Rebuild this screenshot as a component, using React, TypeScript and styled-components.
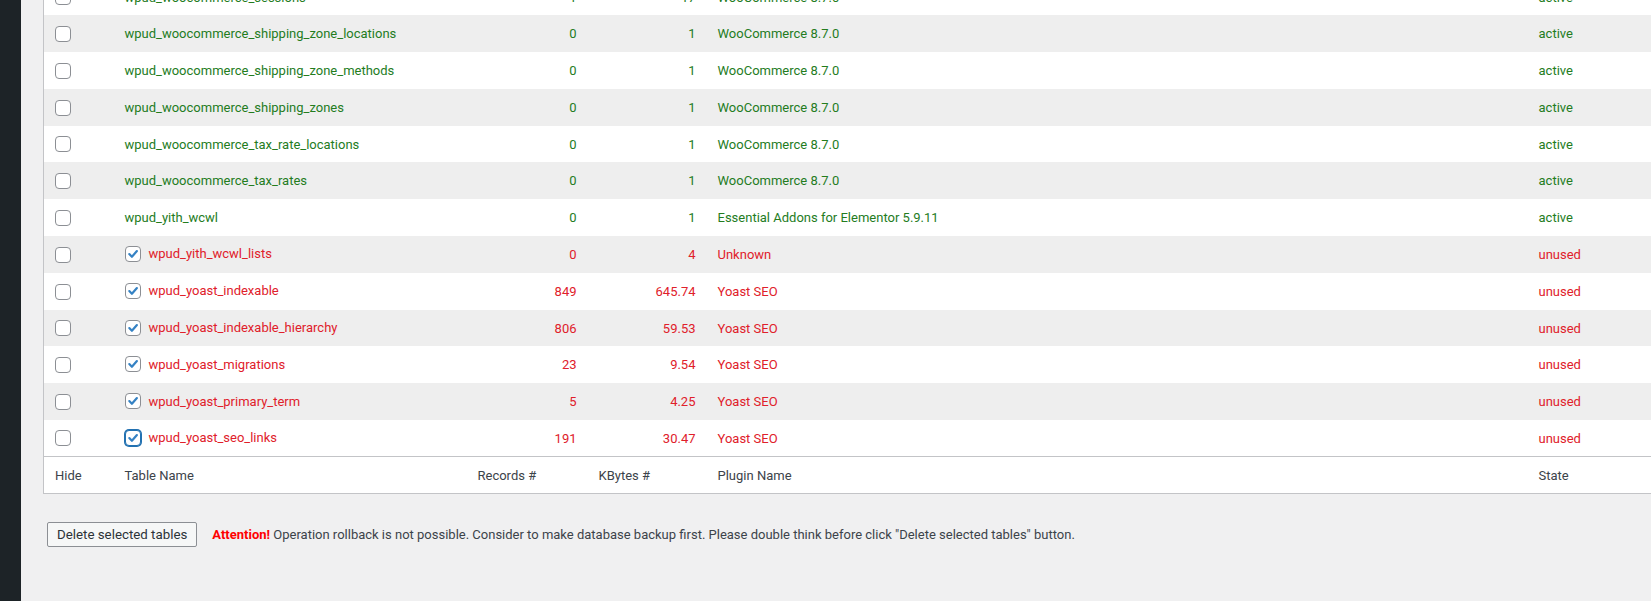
import React from "react";
import styled, { createGlobalStyle, css } from "styled-components";

const GlobalStyle = createGlobalStyle`
  html, body { margin: 0; padding: 0; }
  body {
    background: #f0f0f1;
    font-family: Roboto, "Open Sans", "Liberation Sans", sans-serif;
    font-size: 13px;
    color: #2c3338;
    overflow: hidden;
  }
`;

type Status = "active" | "unused";

interface Row {
  name: string;
  records: string;
  kbytes: string;
  plugin: string;
  status: Status;
  checked?: boolean;
  focused?: boolean;
}

const rows: Row[] = [
  { name: "wpud_woocommerce_sessions", records: "1", kbytes: "17", plugin: "WooCommerce 8.7.0", status: "active" },
  { name: "wpud_woocommerce_shipping_zone_locations", records: "0", kbytes: "1", plugin: "WooCommerce 8.7.0", status: "active" },
  { name: "wpud_woocommerce_shipping_zone_methods", records: "0", kbytes: "1", plugin: "WooCommerce 8.7.0", status: "active" },
  { name: "wpud_woocommerce_shipping_zones", records: "0", kbytes: "1", plugin: "WooCommerce 8.7.0", status: "active" },
  { name: "wpud_woocommerce_tax_rate_locations", records: "0", kbytes: "1", plugin: "WooCommerce 8.7.0", status: "active" },
  { name: "wpud_woocommerce_tax_rates", records: "0", kbytes: "1", plugin: "WooCommerce 8.7.0", status: "active" },
  { name: "wpud_yith_wcwl", records: "0", kbytes: "1", plugin: "Essential Addons for Elementor 5.9.11", status: "active" },
  { name: "wpud_yith_wcwl_lists", records: "0", kbytes: "4", plugin: "Unknown", status: "unused", checked: true },
  { name: "wpud_yoast_indexable", records: "849", kbytes: "645.74", plugin: "Yoast SEO", status: "unused", checked: true },
  { name: "wpud_yoast_indexable_hierarchy", records: "806", kbytes: "59.53", plugin: "Yoast SEO", status: "unused", checked: true },
  { name: "wpud_yoast_migrations", records: "23", kbytes: "9.54", plugin: "Yoast SEO", status: "unused", checked: true },
  { name: "wpud_yoast_primary_term", records: "5", kbytes: "4.25", plugin: "Yoast SEO", status: "unused", checked: true },
  { name: "wpud_yoast_seo_links", records: "191", kbytes: "30.47", plugin: "Yoast SEO", status: "unused", checked: true, focused: true },
];

const Page = styled.div`
  display: flex;
  min-height: 601px;
`;

const Sidebar = styled.aside`
  flex: 0 0 21px;
  background: #1d2327;
`;

const Main = styled.main`
  flex: 1;
  min-width: 0;
  overflow: hidden;
  padding-left: 22px;
`;

const Scroller = styled.div`
  margin-top: -22px;
`;

const Table = styled.table`
  width: 1640px;
  table-layout: fixed;
  border-collapse: collapse;
  background: #fff;
  border: 1px solid #c3c4c7;
`;

const BodyRow = styled.tr<{ $striped: boolean }>`
  height: 36.8px;
  background: ${(p) => (p.$striped ? "#eeeeee" : "#fff")};
`;

const FootRow = styled.tr`
  height: 37px;
  border-top: 1px solid #c3c4c7;
  background: #fff;
`;

const Cell = styled.td<{ $status?: Status; $right?: boolean }>`
  padding: 0 11px;
  vertical-align: middle;
  white-space: nowrap;
  overflow: hidden;
  text-align: ${(p) => (p.$right ? "right" : "left")};
  ${(p) =>
    p.$status === "active" &&
    css`
      color: #247c1e;
    `}
  ${(p) =>
    p.$status === "unused" &&
    css`
      color: #e0202a;
    `}
`;

const HeadCell = styled.th`
  padding: 0 11px;
  font-weight: 400;
  text-align: left;
  color: #3c434a;
  white-space: nowrap;
`;

const NameWrap = styled.span`
  display: inline-flex;
  align-items: center;
  gap: 8px;
`;

const Box = styled.span<{ $focused?: boolean }>`
  display: inline-flex;
  align-items: center;
  justify-content: center;
  box-sizing: border-box;
  width: 16px;
  height: 16px;
  border-radius: 4px;
  background: #fff;
  border: 1px solid ${(p) => (p.$focused ? "#2271b1" : "#8c8f94")};
  box-shadow: ${(p) => (p.$focused ? "0 0 0 1px #2271b1" : "none")};
  vertical-align: middle;
`;

const Check = ({ checked, focused }: { checked?: boolean; focused?: boolean }) => (
  <Box $focused={focused}>
    {checked && (
      <svg width="12" height="12" viewBox="0 0 12 12" aria-hidden="true">
        <path d="M2.3 6.1 L4.9 8.8 L9.9 3.1" fill="none" stroke="#3582c4" strokeWidth="2.2" strokeLinecap="round" strokeLinejoin="round" />
      </svg>
    )}
  </Box>
);

const Actions = styled.div`
  display: flex;
  align-items: center;
  gap: 15px;
  margin: 28px 0 0 4px;
`;

const Button = styled.button`
  height: 25px;
  padding: 0 9px;
  font-family: inherit;
  font-size: 13.3px;
  color: #2c3338;
  background: #f6f7f7;
  border: 1px solid #8c8f94;
  border-radius: 2px;
  cursor: pointer;
`;

const Notice = styled.p`
  margin: 0;
  color: #3c434a;
`;

const Attention = styled.strong`
  color: #ff0000;
  font-weight: 700;
`;

export default function App() {
  return (
    <>
      <GlobalStyle />
      <Page>
        <Sidebar />
        <Main>
          <Scroller>
            <Table>
              <colgroup>
                <col style={{ width: 70 }} />
                <col style={{ width: 353 }} />
                <col style={{ width: 121 }} />
                <col style={{ width: 119 }} />
                <col style={{ width: 821 }} />
                <col />
              </colgroup>
              <tbody>
                {rows.map((r, i) => (
                  <BodyRow key={r.name} $striped={i % 2 === 1}>
                    <Cell>
                      <Check />
                    </Cell>
                    <Cell $status={r.status}>
                      {r.checked ? (
                        <NameWrap>
                          <Check checked focused={r.focused} />
                          {r.name}
                        </NameWrap>
                      ) : (
                        r.name
                      )}
                    </Cell>
                    <Cell $status={r.status} $right>
                      {r.records}
                    </Cell>
                    <Cell $status={r.status} $right>
                      {r.kbytes}
                    </Cell>
                    <Cell $status={r.status}>{r.plugin}</Cell>
                    <Cell $status={r.status}>{r.status}</Cell>
                  </BodyRow>
                ))}
              </tbody>
              <tfoot>
                <FootRow>
                  <HeadCell>Hide</HeadCell>
                  <HeadCell>Table Name</HeadCell>
                  <HeadCell>Records #</HeadCell>
                  <HeadCell>KBytes #</HeadCell>
                  <HeadCell>Plugin Name</HeadCell>
                  <HeadCell>State</HeadCell>
                </FootRow>
              </tfoot>
            </Table>
          </Scroller>
          <Actions>
            <Button type="button">Delete selected tables</Button>
            <Notice>
              <Attention>Attention!</Attention> Operation rollback is not possible. Consider to make database backup
              first. Please double think before click "Delete selected tables" button.
            </Notice>
          </Actions>
        </Main>
      </Page>
    </>
  );
}
